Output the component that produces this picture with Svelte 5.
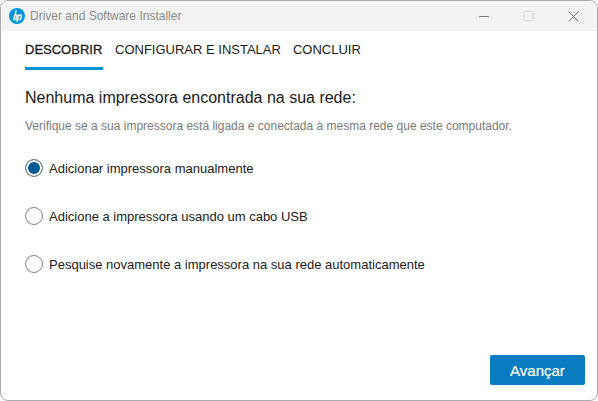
<script>
  const options = [
    { label: 'Adicionar impressora manualmente', checked: true },
    { label: 'Adicione a impressora usando um cabo USB', checked: false },
    { label: 'Pesquise novamente a impressora na sua rede automaticamente', checked: false }
  ];
</script>

<div class="window">
  <header class="titlebar">
    <div class="logo">
      <svg width="16" height="16" viewBox="0 0 16 16">
        <circle cx="8" cy="8" r="8" fill="#0096d6" />
        <path d="M7.2 2.6 4.4 12.6M5.8 7h2.2L6.5 12.4M9.8 7 7.9 13.8M9.8 7h1.6c.9 0 1.2.6 1 1.3l-.6 2.2c-.2.7-.8 1.1-1.5 1.1H9" fill="none" stroke="#fff" stroke-width="1.4" />
      </svg>
    </div>
    <span class="title">Driver and Software Installer</span>
    <div class="controls">
      <span class="ctl"><span class="dash"></span></span>
      <span class="ctl"><span class="max"></span></span>
      <span class="ctl">
        <svg width="11" height="11" viewBox="0 0 11 11"><path d="M.5.5l10 10M10.5.5l-10 10" stroke="#777" stroke-width="1" fill="none" /></svg>
      </span>
    </div>
  </header>

  <main class="content">
    <nav class="tabs">
      <span class="tab active">DESCOBRIR</span>
      <span class="tab">CONFIGURAR E INSTALAR</span>
      <span class="tab">CONCLUIR</span>
    </nav>

    <h1>Nenhuma impressora encontrada na sua rede:</h1>
    <p class="hint">Verifique se a sua impressora está ligada e conectada à mesma rede que este computador.</p>

    <div class="options">
      {#each options as o}
        <div class="option">
          <span class="radio" class:checked={o.checked}></span>
          <span class="label">{o.label}</span>
        </div>
      {/each}
    </div>

    <div class="footer">
      <button class="next">Avançar</button>
    </div>
  </main>
</div>

<style>
  :global(html), :global(body) { margin: 0; background: #fff; }
  .window {
    box-sizing: border-box;
    width: 598px;
    height: 401px;
    border: 1px solid #ababab;
    border-radius: 8px;
    overflow: hidden;
    background: #fff;
    display: flex;
    flex-direction: column;
    font-family: "Liberation Sans", Arial, sans-serif;
    color: #1a1a1a;
  }
  .titlebar {
    height: 30px;
    flex: none;
    background: #f3f3f3;
    display: flex;
    align-items: center;
    padding-left: 8px;
  }
  .logo { width: 16px; height: 16px; margin-right: 5px; }
  .logo svg { display: block; }
  .title { font-size: 12px; color: #8a8a8a; }
  .controls { margin-left: auto; display: flex; margin-right: 1px; }
  .ctl { width: 45px; height: 30px; display: flex; align-items: center; justify-content: center; }
  .dash { width: 10px; height: 1px; background: #777; }
  .max { width: 8px; height: 8px; border: 1px solid #dcdcdc; border-radius: 1px; }
  .content {
    flex: 1;
    display: flex;
    flex-direction: column;
    padding: 0 12px 15px 24px;
  }
  .tabs { display: flex; gap: 12px; height: 39px; font-size: 13px; }
  .tab { box-sizing: border-box; height: 39px; padding-top: 11px; line-height: 16px; color: #1a1a1a; }
  .tab.active { min-width: 78px; border-bottom: 3px solid #0096d6; -webkit-text-stroke: 0.3px #1a1a1a; }
  h1 { margin: 18px 0 0; font-size: 16px; font-weight: 400; line-height: 20px; }
  .hint { margin: 11px 0 0; font-size: 12px; line-height: 14px; color: #7a7a7a; }
  .options { margin-top: 25px; display: flex; flex-direction: column; gap: 28px; }
  .option { display: flex; align-items: center; gap: 6px; height: 20px; font-size: 13px; }
  .radio {
    box-sizing: border-box;
    width: 18px;
    height: 18px;
    border: 1px solid #7f7f7f;
    border-radius: 50%;
    background: #fff;
    flex: none;
  }
  .radio.checked { background: #005a94; box-shadow: inset 0 0 0 2px #fff; }
  .footer { margin-top: auto; display: flex; justify-content: flex-end; }
  .next {
    width: 95px;
    height: 30px;
    border: none;
    border-radius: 2px;
    background: #0a7dc2;
    color: #fff;
    font: 15px "Liberation Sans", Arial, sans-serif;
    padding: 0;
    -webkit-text-stroke: 0.2px #fff;
  }
</style>
